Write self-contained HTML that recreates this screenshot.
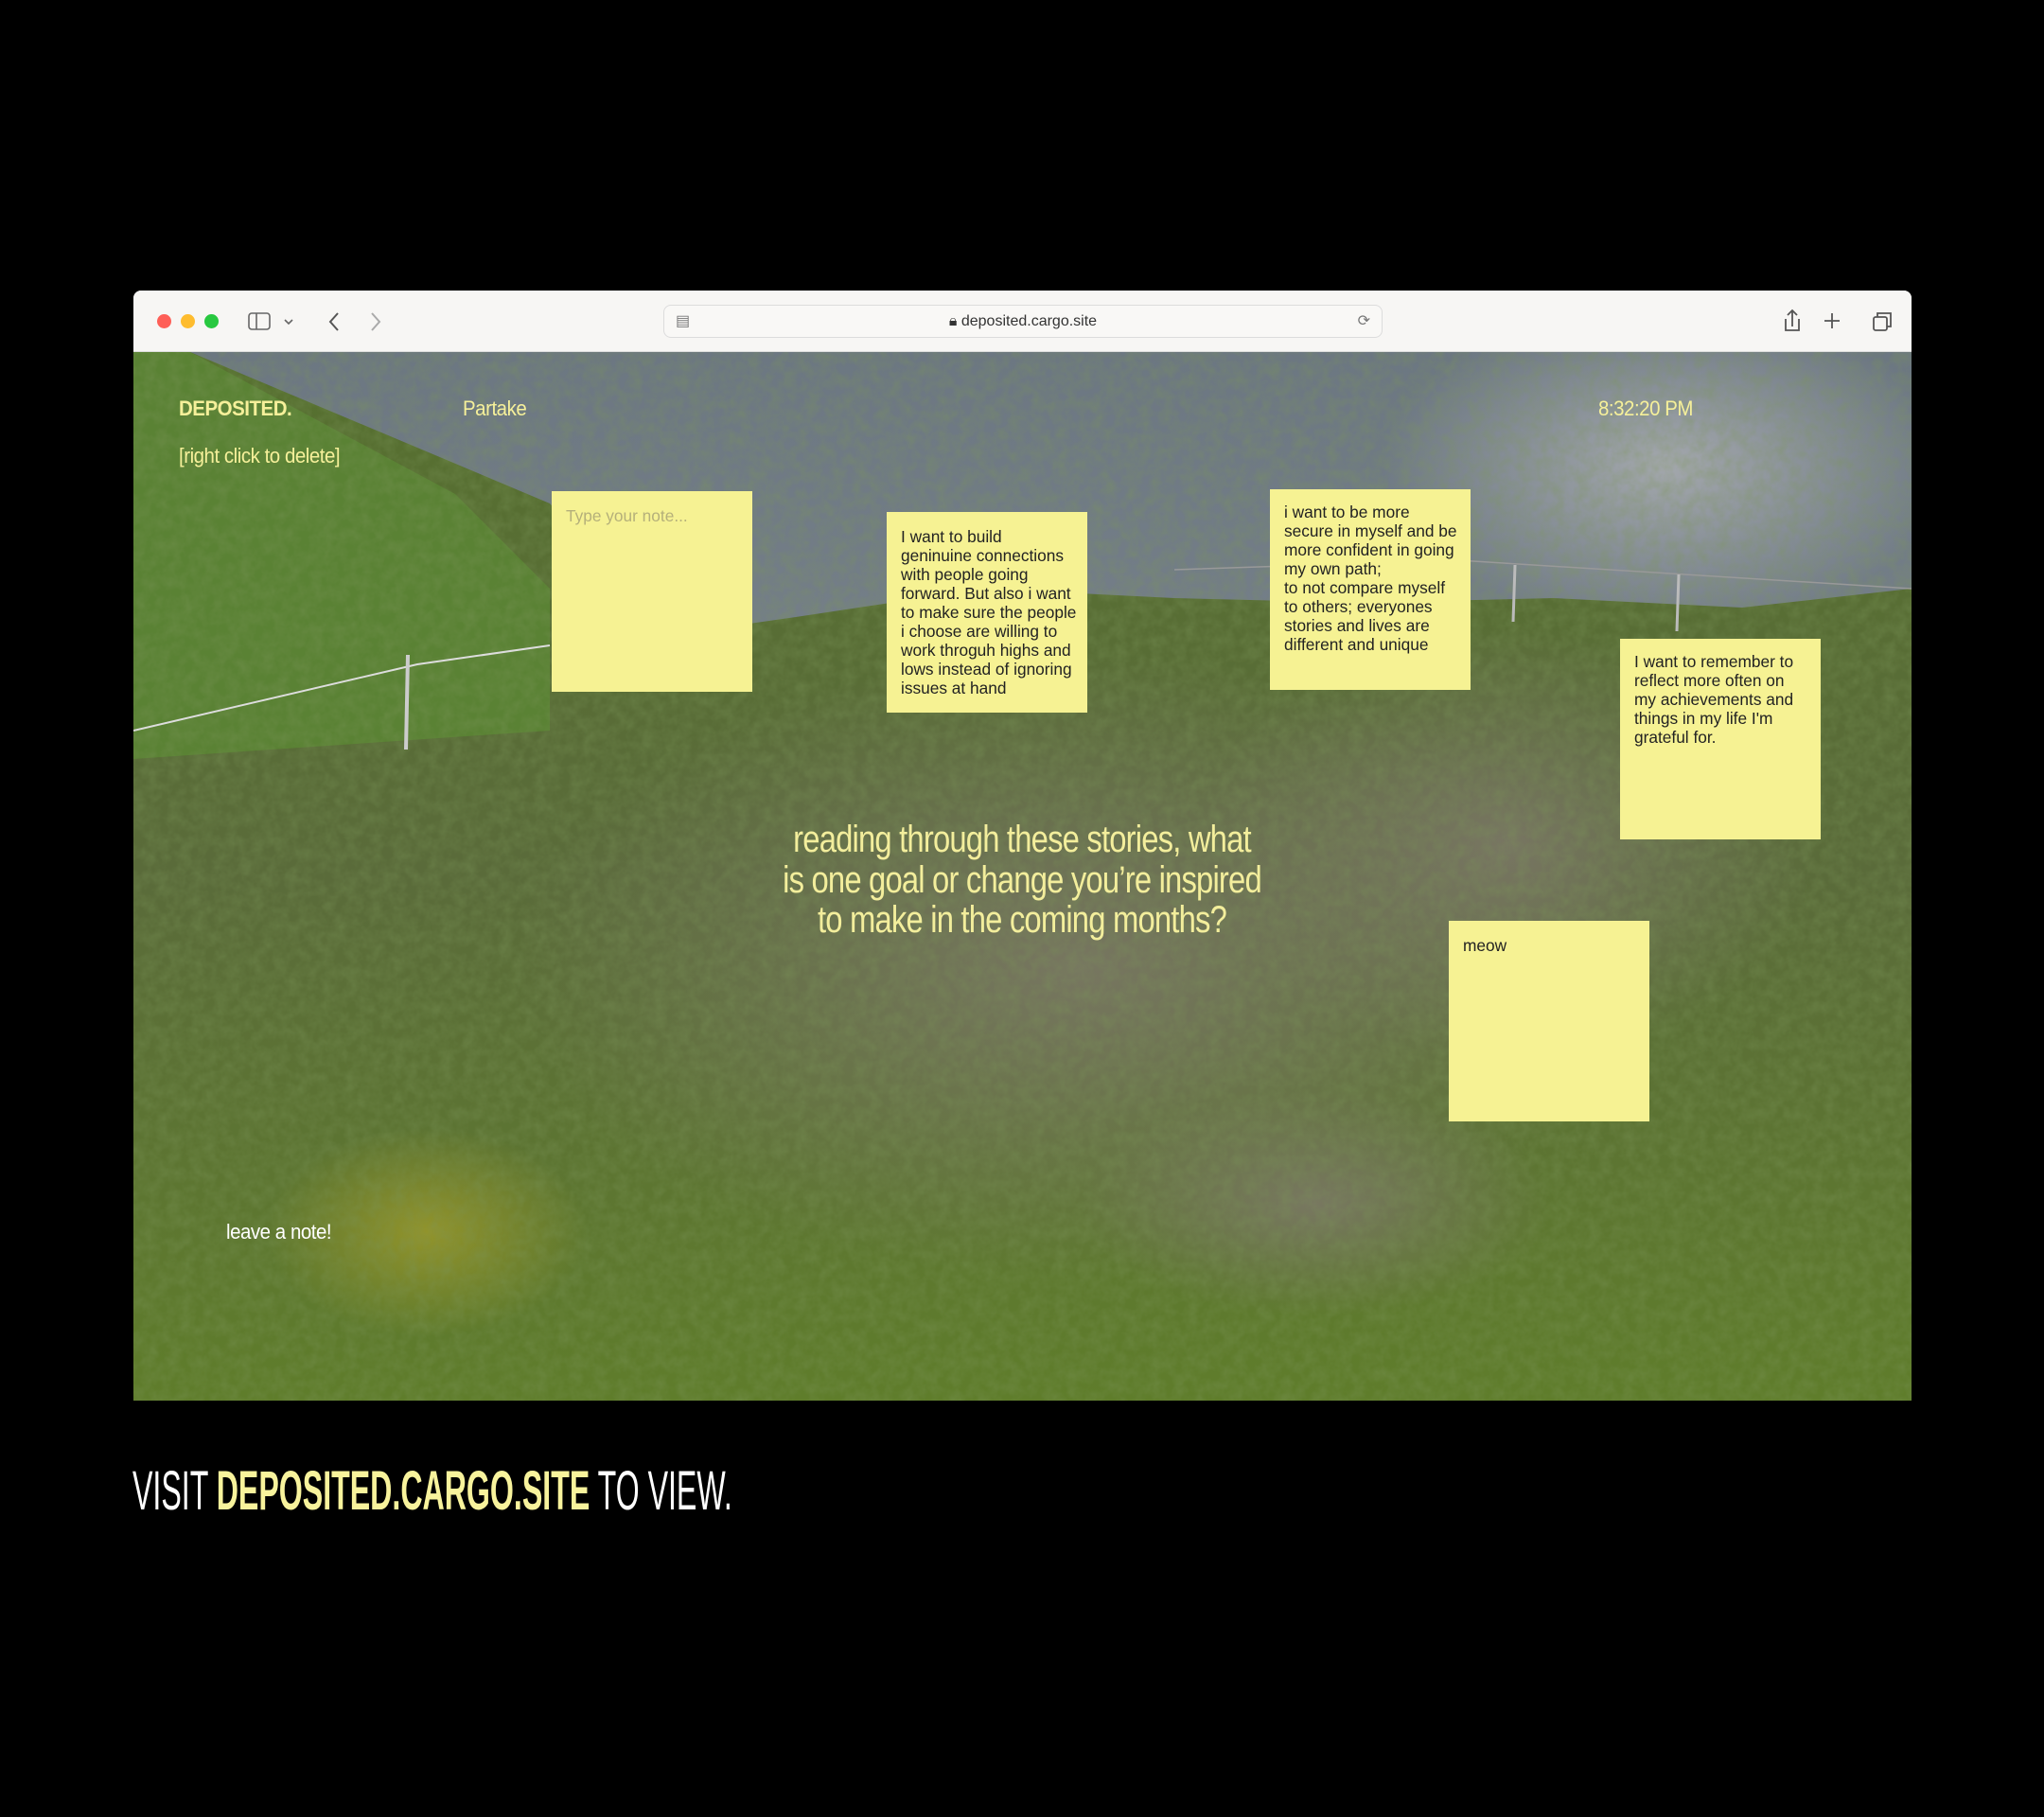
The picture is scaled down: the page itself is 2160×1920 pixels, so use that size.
<!DOCTYPE html>
<html><head><meta charset="utf-8"><style>
*{margin:0;padding:0;box-sizing:border-box}
body{width:2160px;height:1920px;background:#000;position:relative;overflow:hidden;font-family:"Liberation Sans",sans-serif}
.win{position:absolute;left:141px;top:307px;width:1879px;height:1173px;background:#f7f6f4;border-radius:8px 8px 0 0;overflow:hidden}
.bar{position:absolute;left:0;top:0;width:100%;height:65px;background:#f7f6f4;border-bottom:1px solid #ddd}
.dot{position:absolute;top:25px;width:15px;height:15px;border-radius:50%}
.url{position:absolute;left:560px;top:15px;width:760px;height:35px;border:1px solid #dcdcdc;border-radius:8px;background:#f9f8f6;font-size:16px;color:#333;text-align:center;line-height:33px}
.view{position:absolute;left:0;top:65px;width:100%;height:1108px;overflow:hidden}
.t{position:absolute;color:#f6f09a;font-size:22px;transform-origin:0 0;transform:scaleX(.93);letter-spacing:-0.5px;white-space:nowrap}
.note{position:absolute;width:212px;height:212px;background:#f6f293;padding:22px 4px 22px 15px;font-size:17.3px;line-height:20px;color:#222;white-space:nowrap;overflow:hidden}
.q{position:absolute;left:680px;top:866px;width:800px;text-align:center;color:#f3ee9c;font-size:40px;line-height:42.5px;letter-spacing:-1px;transform-origin:50% 0;transform:scaleX(.82);white-space:nowrap}
.foot{position:absolute;left:140px;top:1542px;font-size:58px;color:#fff;white-space:nowrap;transform-origin:0 0;transform:scaleX(.554)}
</style></head><body>
<div class="win">
 <div class="bar">
  <div class="dot" style="left:25px;background:#fe5f57"></div>
  <div class="dot" style="left:50px;background:#febc2e"></div>
  <div class="dot" style="left:75px;background:#28c840"></div>
  <svg style="position:absolute;left:120px;top:20px" width="60" height="26" fill="none" stroke="#666" stroke-width="1.6"><rect x="2" y="4" width="22" height="17" rx="3"/><line x1="10" y1="4" x2="10" y2="21"/><path d="M40 11l4 4 4-4"/></svg>
  <svg style="position:absolute;left:200px;top:20px" width="70" height="26" fill="none" stroke-width="2"><path d="M16 4l-8 9 8 9" stroke="#555"/><path d="M52 4l8 9-8 9" stroke="#aaa"/></svg>
  <div class="url"><span style="position:absolute;left:12px;top:0;color:#777">▤</span>🔒︎ deposited.cargo.site<span style="position:absolute;right:12px;top:0;color:#777">⟳</span></div>
  <svg style="position:absolute;left:1735px;top:16px" width="130" height="32" fill="none" stroke="#555" stroke-width="1.8"><path d="M18 6v16M13 10l5-5 5 5M11 14v12h14V14"/><path d="M60 8v16M52 16h16"/><rect x="104" y="12" width="14" height="14" rx="2"/><path d="M108 12V8h14v14h-4"/></svg>
 </div>
 <div class="view">
  <svg width="1879" height="1108" style="position:absolute;left:0;top:0">
   <defs>
    <linearGradient id="sky" x1="0" y1="0" x2="0" y2="1"><stop offset="0" stop-color="#6c7782"/><stop offset="1" stop-color="#8b9399"/></linearGradient>
    <linearGradient id="gr" x1="0" y1="0" x2="0" y2="1"><stop offset="0" stop-color="#56702f"/><stop offset=".5" stop-color="#5a6b3a"/><stop offset="1" stop-color="#5f7d2b"/></linearGradient>
    <radialGradient id="rock" cx=".5" cy=".5" r=".5"><stop offset="0" stop-color="#7c7768" stop-opacity=".85"/><stop offset="1" stop-color="#7c7768" stop-opacity="0"/></radialGradient>
    <radialGradient id="cl" cx=".5" cy=".5" r=".5"><stop offset="0" stop-color="#b0b3b6" stop-opacity=".8"/><stop offset="1" stop-color="#b0b3b6" stop-opacity="0"/></radialGradient>
    <radialGradient id="fl" cx=".5" cy=".5" r=".5"><stop offset="0" stop-color="#a8a02a" stop-opacity=".7"/><stop offset="1" stop-color="#a8a02a" stop-opacity="0"/></radialGradient>
    <filter id="n"><feTurbulence type="fractalNoise" baseFrequency=".08" numOctaves="3"/><feColorMatrix values="0 0 0 0 0.2  0 0 0 0 0.3  0 0 0 0 0.1  0 0 0 1.2 -0.35"/></filter>
   </defs>
   <rect width="1879" height="1108" fill="url(#sky)"/>
   <ellipse cx="1620" cy="120" rx="300" ry="170" fill="url(#cl)"/>
   <path d="M0 0 H60 L440 160 L560 300 L700 280 L900 250 L1100 260 L1300 265 L1500 260 L1700 270 L1879 250 V1108 H0Z" fill="url(#gr)"/>
   <path d="M0 0 H60 L340 150 L440 250 L440 400 L0 430Z" fill="#5a8234"/>
   <ellipse cx="1000" cy="650" rx="600" ry="330" fill="url(#rock)"/>
   <ellipse cx="1450" cy="520" rx="330" ry="230" fill="url(#rock)"/>
   <ellipse cx="1250" cy="900" rx="250" ry="120" fill="url(#rock)"/>
   <ellipse cx="310" cy="930" rx="170" ry="110" fill="url(#fl)"/>
   <rect width="1879" height="1108" filter="url(#n)" opacity=".5"/>
   <path d="M0 400 L300 330 L440 310" stroke="#ddd" stroke-width="2" fill="none"/>
   <path d="M1100 230 L1400 220 L1879 250" stroke="#999" stroke-width="1.5" fill="none"/>
   <line x1="290" y1="320" x2="288" y2="420" stroke="#ccc" stroke-width="4"/>
   <line x1="1460" y1="225" x2="1458" y2="285" stroke="#bbb" stroke-width="3"/>
   <line x1="1633" y1="235" x2="1631" y2="295" stroke="#bbb" stroke-width="3"/>
  </svg>
  <div class="t" style="left:48px;top:47px;font-weight:bold">DEPOSITED.</div>
  <div class="t" style="left:348px;top:47px">Partake</div>
  <div class="t" style="left:1548px;top:47px">8:32:20 PM</div>
  <div class="t" style="left:48px;top:97px">[right click to delete]</div>
  <div class="t" style="left:98px;top:917px;color:#fff">leave a note!</div>
 </div>
</div>
<div class="note" style="left:583px;top:519px;color:#b5b07a;padding-top:16px">Type your note...</div>
<div class="note" style="left:937px;top:541px;padding-top:16px">I want to build<br>geninuine connections<br>with people going<br>forward. But also i want<br>to make sure the people<br>i choose are willing to<br>work throguh highs and<br>lows instead of ignoring<br>issues at hand</div>
<div class="note" style="left:1342px;top:517px;padding-top:14px">i want to be more<br>secure in myself and be<br>more confident in going<br>my own path;<br>to not compare myself<br>to others; everyones<br>stories and lives are<br>different and unique</div>
<div class="note" style="left:1712px;top:675px;padding-top:14px">I want to remember to<br>reflect more often on<br>my achievements and<br>things in my life I'm<br>grateful for.</div>
<div class="note" style="left:1531px;top:973px;padding-top:16px">meow</div>
<div class="q">reading through these stories, what<br>is one goal or change you’re inspired<br>to make in the coming months?</div>
<div class="foot">VISIT <b style="color:#f8f39c">DEPOSITED.CARGO.SITE</b> TO VIEW.</div>
</body></html>
